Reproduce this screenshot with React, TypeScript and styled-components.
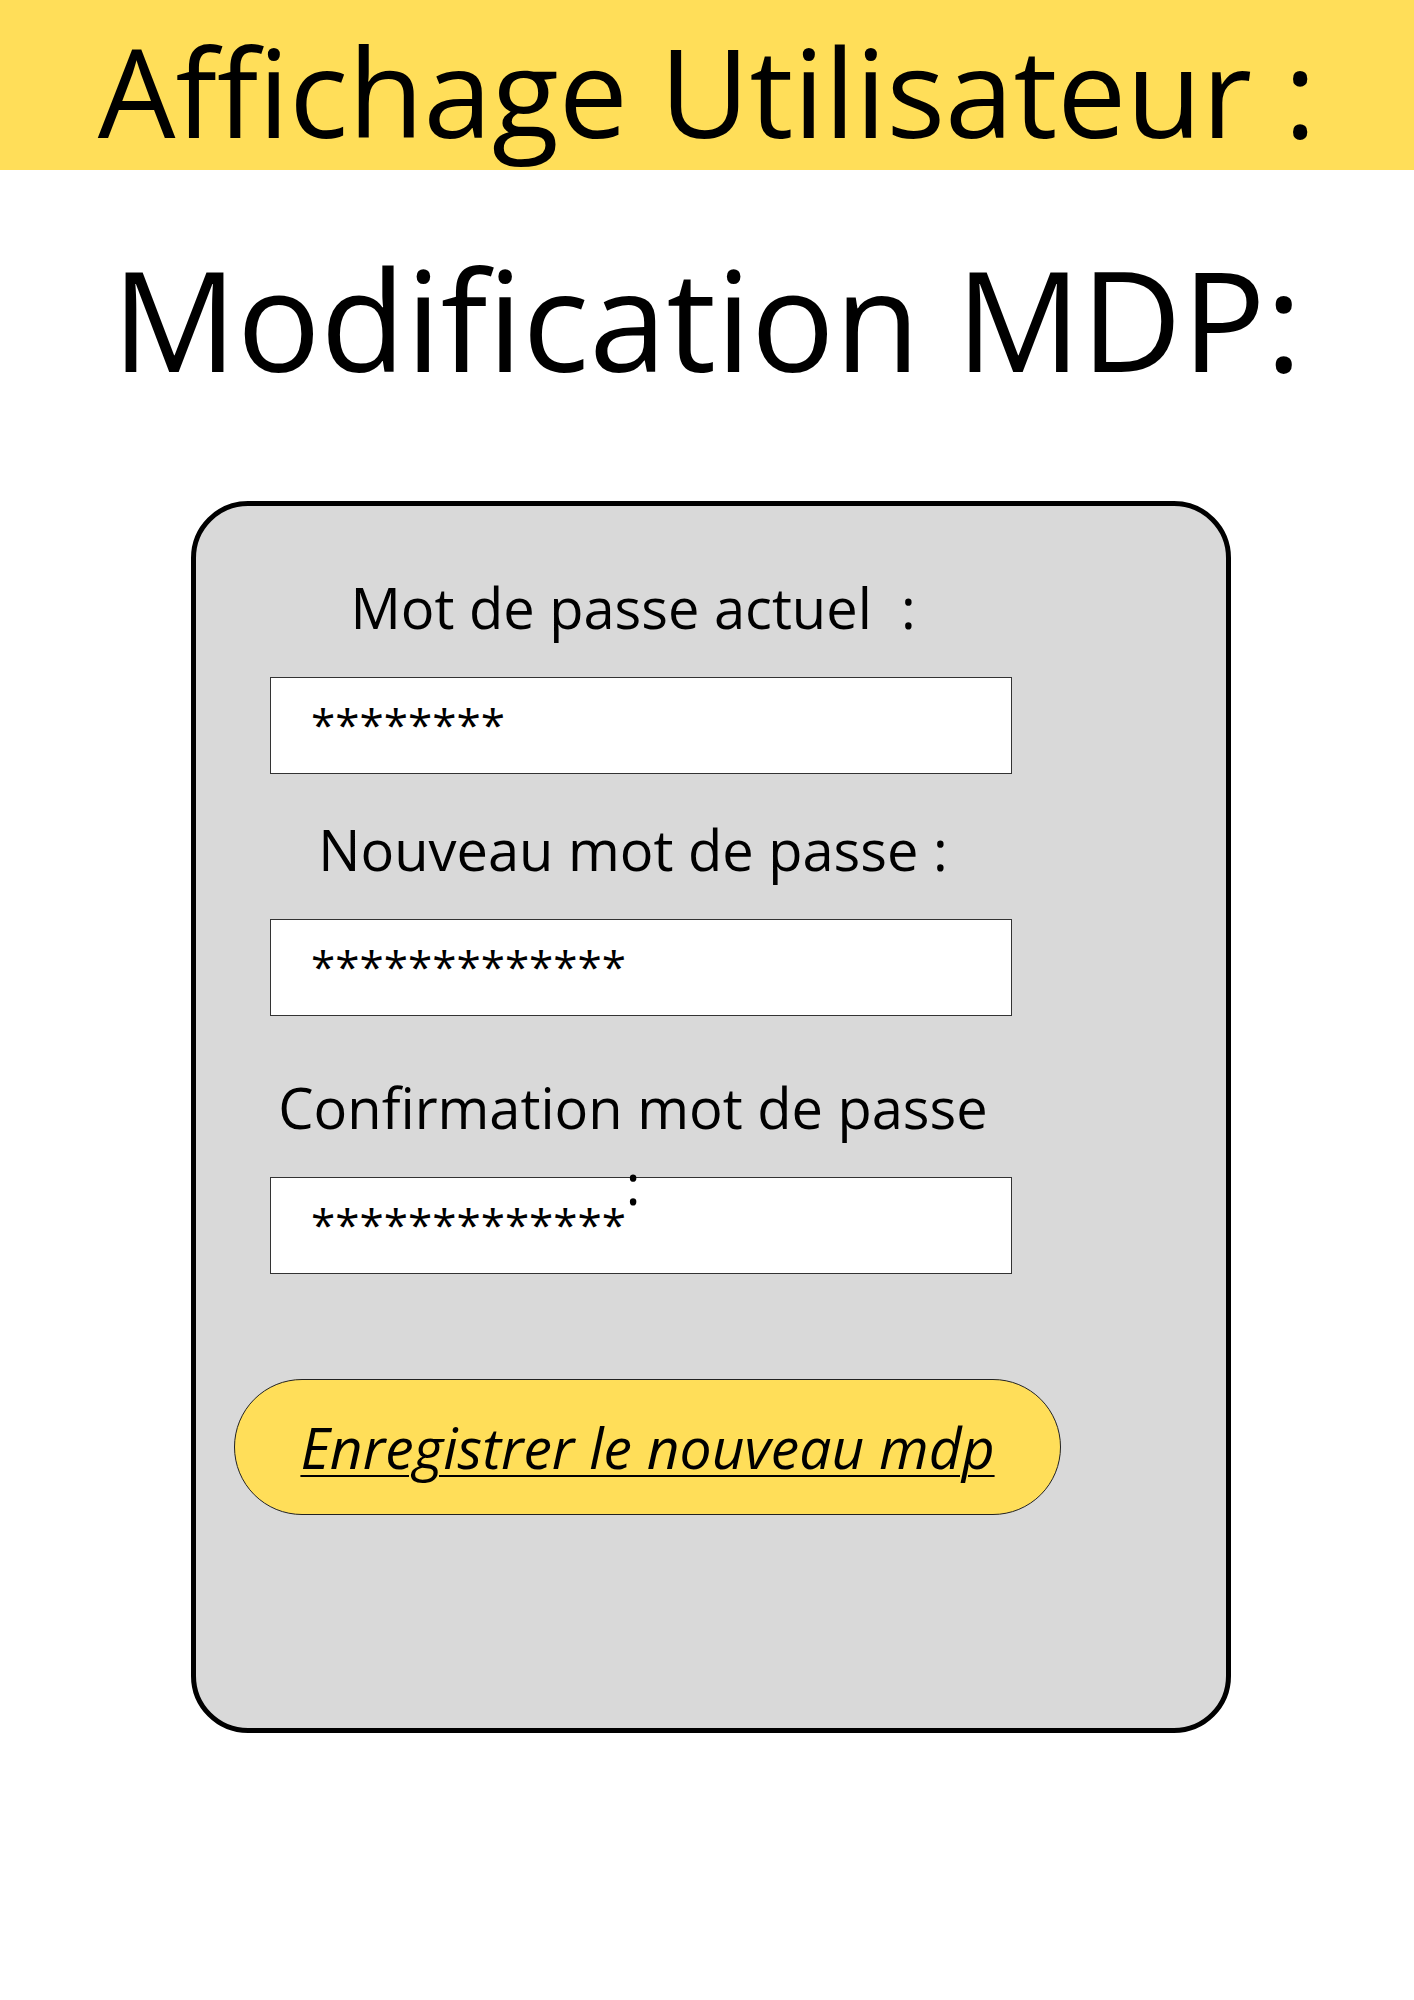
import React from 'react'
import styled, { createGlobalStyle } from 'styled-components'

const GlobalStyle = createGlobalStyle`
  body {
    margin: 0;
    background: #fff;
    font-family: 'Open Sans', 'Noto Sans', sans-serif;
    color: #000;
  }
`

const Page = styled.div`
  width: 1414px;
  min-height: 2000px;
  display: flex;
  flex-direction: column;
  align-items: center;
`

const Header = styled.header`
  box-sizing: border-box;
  width: 100%;
  height: 170px;
  padding-top: 29px;
  background: #ffde59;
  text-align: center;
  font-size: 123px;
  line-height: 1;
`

const Title = styled.h1`
  margin: 79px 0 0;
  font-size: 139px;
  font-weight: 400;
  line-height: 1;
  text-align: center;
`

const Card = styled.section`
  box-sizing: border-box;
  width: 1040px;
  height: 1232px;
  margin: 113px 0 0 8px;
  padding: 63px 0 0 74px;
  border: 5px solid #000;
  border-radius: 57px;
  background: #d9d9d9;
  display: flex;
  flex-direction: column;
`

const Field = styled.div<{ $gap: number }>`
  display: flex;
  flex-direction: column;
  margin-top: ${(p) => p.$gap}px;
`

const Label = styled.label`
  position: relative;
  z-index: 1;
  width: 726px;
  height: 76px;
  margin-bottom: 32px;
  font-size: 56px;
  line-height: 76px;
  text-align: center;
  white-space: pre-wrap;
`

const PasswordBox = styled.div`
  box-sizing: border-box;
  width: 742px;
  height: 97px;
  padding: 6px 0 0 40px;
  border: 1px solid #333;
  background: #fff;
  font-size: 44px;
  line-height: 80px;
`

const SaveButton = styled.button`
  box-sizing: border-box;
  width: 827px;
  height: 136px;
  margin: 105px 0 0 -36px;
  padding: 0;
  border: 1px solid #222;
  border-radius: 68px;
  background: #ffde59;
  font-family: 'Open Sans', 'Noto Sans', sans-serif;
  font-size: 57px;
  font-style: italic;
  text-decoration: underline;
  text-decoration-thickness: 2px;
  text-underline-offset: 6px;
  color: #000;
  cursor: pointer;
`

const fields = [
  { label: 'Mot de passe actuel  :', value: '********', gap: 0 },
  { label: 'Nouveau mot de passe :', value: '*************', gap: 37 },
  { label: 'Confirmation mot de passe :', value: '*************', gap: 53 },
]

const App = () => {
  return (
    <Page>
      <GlobalStyle />
      <Header>Affichage Utilisateur :</Header>
      <Title>Modification MDP:</Title>

      <Card>
        {fields.map((f) => (
          <Field key={f.label} $gap={f.gap}>
            <Label>{f.label}</Label>
            <PasswordBox>{f.value}</PasswordBox>
          </Field>
        ))}
        <SaveButton type='button'>Enregistrer le nouveau mdp</SaveButton>
      </Card>
    </Page>
  )
}

export default App
